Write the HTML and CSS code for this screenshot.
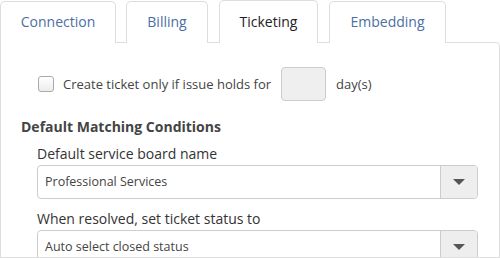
FILE: index.html
```html
<!DOCTYPE html>
<html>
<head>
<meta charset="utf-8">
<link rel="stylesheet" href="styles.css">
</head>
<body>
<div class="tabs">
  <div class="tab tab-connection">Connection</div>
  <div class="tab tab-billing">Billing</div>
  <div class="tab tab-ticketing active">Ticketing</div>
  <div class="tab tab-embedding">Embedding</div>
</div>
<div class="panel">
  <div class="check-row">
    <span class="checkbox"></span>
    <span class="check-label">Create ticket only if issue holds for</span>
    <span class="days-input"></span>
    <span class="check-label">day(s)</span>
  </div>
  <div class="section-title">Default Matching Conditions</div>
  <div class="field">
    <div class="field-label">Default service board name</div>
    <div class="select">
      <div class="select-value">Professional Services</div>
      <div class="select-btn"><span class="caret"></span></div>
    </div>
  </div>
  <div class="field field-second">
    <div class="field-label">When resolved, set ticket status to</div>
    <div class="select">
      <div class="select-value">Auto select closed status</div>
      <div class="select-btn"><span class="caret"></span></div>
    </div>
  </div>
</div>
</body>
</html>
```
FILE: styles.css
```css
html, body {
  margin: 0;
  padding: 0;
  background: #fff;
  overflow: hidden;
}
body {
  font-family: "Open Sans", "DejaVu Sans", sans-serif;
  color: #444;
  width: 500px;
  height: 258px;
}
.tabs {
  display: flex;
  align-items: flex-end;
  height: 43px;
  position: relative;
  z-index: 1;
}
.tab {
  box-sizing: border-box;
  height: 42px;
  margin-right: 11px;
  border: 1px solid #ddd;
  border-bottom: none;
  border-radius: 5px 5px 0 0;
  font-size: 14px;
  line-height: 40px;
  text-align: center;
  color: #4a6fa3;
  background: #fff;
}
.tab-connection { width: 116px; margin-right: 10px; }
.tab-billing { width: 82px; }
.tab-ticketing { width: 99px; }
.tab-embedding { width: 117px; }
.tab.active {
  height: 43px;
  color: #222;
  line-height: 42px;
}
.panel {
  box-sizing: border-box;
  width: 500px;
  height: 216px;
  margin-top: -1px;
  border: 1px solid #ddd;
  border-radius: 0 4px 0 0;
  padding: 24px 0 0 20px;
  overflow: hidden;
}
.check-row {
  display: flex;
  align-items: center;
  margin-left: 17px;
  height: 33px;
}
.checkbox {
  box-sizing: border-box;
  width: 16px;
  height: 16px;
  border: 1px solid #aaa;
  border-radius: 3px;
  background: linear-gradient(#fff, #ececec);
  margin-right: 9px;
}
.check-label {
  font-size: 13px;
  color: #444;
}
.days-input {
  box-sizing: border-box;
  width: 45px;
  height: 34px;
  border: 1px solid #ccc;
  border-radius: 4px;
  background: #efefef;
  margin: 0 10px 0 10px;
}
.section-title {
  margin-top: 17px;
  font-size: 14px;
  font-weight: bold;
  color: #444;
  line-height: 20px;
}
.field {
  margin-left: 16px;
}
.field-label {
  margin-top: 7px;
  font-size: 14px;
  line-height: 19px;
  color: #333;
  margin-bottom: 2px;
}
.field-second .field-label {
  margin-top: 10px;
  margin-bottom: 2px;
}
.select {
  box-sizing: border-box;
  display: flex;
  width: 441px;
  height: 34px;
  border: 1px solid #ccc;
  border-radius: 4px;
  overflow: hidden;
}
.select-value {
  flex: 1;
  padding-left: 7px;
  font-size: 12.5px;
  line-height: 32px;
  color: #444;
}
.select-btn {
  width: 36px;
  border-left: 1px solid #ccc;
  background: #eee;
  display: flex;
  align-items: center;
  justify-content: center;
}
.caret {
  width: 0;
  height: 0;
  border-left: 6px solid transparent;
  border-right: 6px solid transparent;
  border-top: 6px solid #555;
}
```
